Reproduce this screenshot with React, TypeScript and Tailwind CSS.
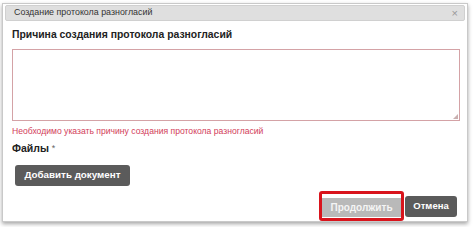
import React from "react";

const font = { fontFamily: '"Liberation Sans", Arial, sans-serif' };

export default function App() {
  return (
    <div className="w-[474px] h-[227px] bg-white overflow-hidden" style={font}>
      <div className="ml-[2px] mt-[3px] w-[466px] h-[219px] border border-[#c9c9c9] bg-white shadow-[0_2px_4px_rgba(0,0,0,0.35)] flex flex-col">
        {/* Header */}
        <div className="mx-[2px] mt-[1px] h-[23px] bg-[#dfdfdf] border border-[#d0d0d0] rounded-[2px] flex items-center justify-between pl-[8px] pr-[6px]">
          <span className="text-[8.9px] text-[#333]">Создание протокола разногласий</span>
          <span className="text-[11px] text-[#999] leading-none">×</span>
        </div>

        {/* Body */}
        <div className="px-[9px] flex flex-col">
          <div className="mt-[7px] text-[10.4px] font-bold text-[#222] leading-[14px]">
            Причина создания протокола разногласий
          </div>
          <div className="relative mt-[7px] h-[72px] w-[448px] border border-[#d4a2a6] bg-white">
            <div className="absolute right-[1px] bottom-[1px] w-0 h-0 border-l-[5px] border-l-transparent border-b-[5px] border-b-[#c9b0b0]" />
          </div>
          <div className="mt-[4px] text-[8.6px] text-[#d2405a] leading-[12px]">
            Необходимо указать причину создания протокола разногласий
          </div>
          <div className="mt-[4px] text-[10.5px] font-bold text-[#222] leading-[14px]">
            Файлы <span className="font-normal text-[#666] text-[9px] align-top">*</span>
          </div>
          <div className="mt-[6px] ml-[3px]">
            <button className="h-[21px] w-[115px] rounded-[3px] bg-[#5b5b5b] text-white text-[9.8px] font-bold">
              Добавить документ
            </button>
          </div>
        </div>

        {/* Footer */}
        <div className="mt-[5px] flex justify-end items-center pr-[10px]">
          <div className="border-[3px] border-[#d9141c] rounded-[3px] p-0">
            <button className="h-[19px] w-[79px] bg-[#b9b9b9] text-[#f4f4f4] text-[10px] font-bold">
              Продолжить
            </button>
          </div>
          <button className="ml-[1px] h-[21px] w-[52px] rounded-[3px] bg-[#5b5b5b] text-white text-[9.5px] font-bold">
            Отмена
          </button>
        </div>
      </div>
    </div>
  );
}
